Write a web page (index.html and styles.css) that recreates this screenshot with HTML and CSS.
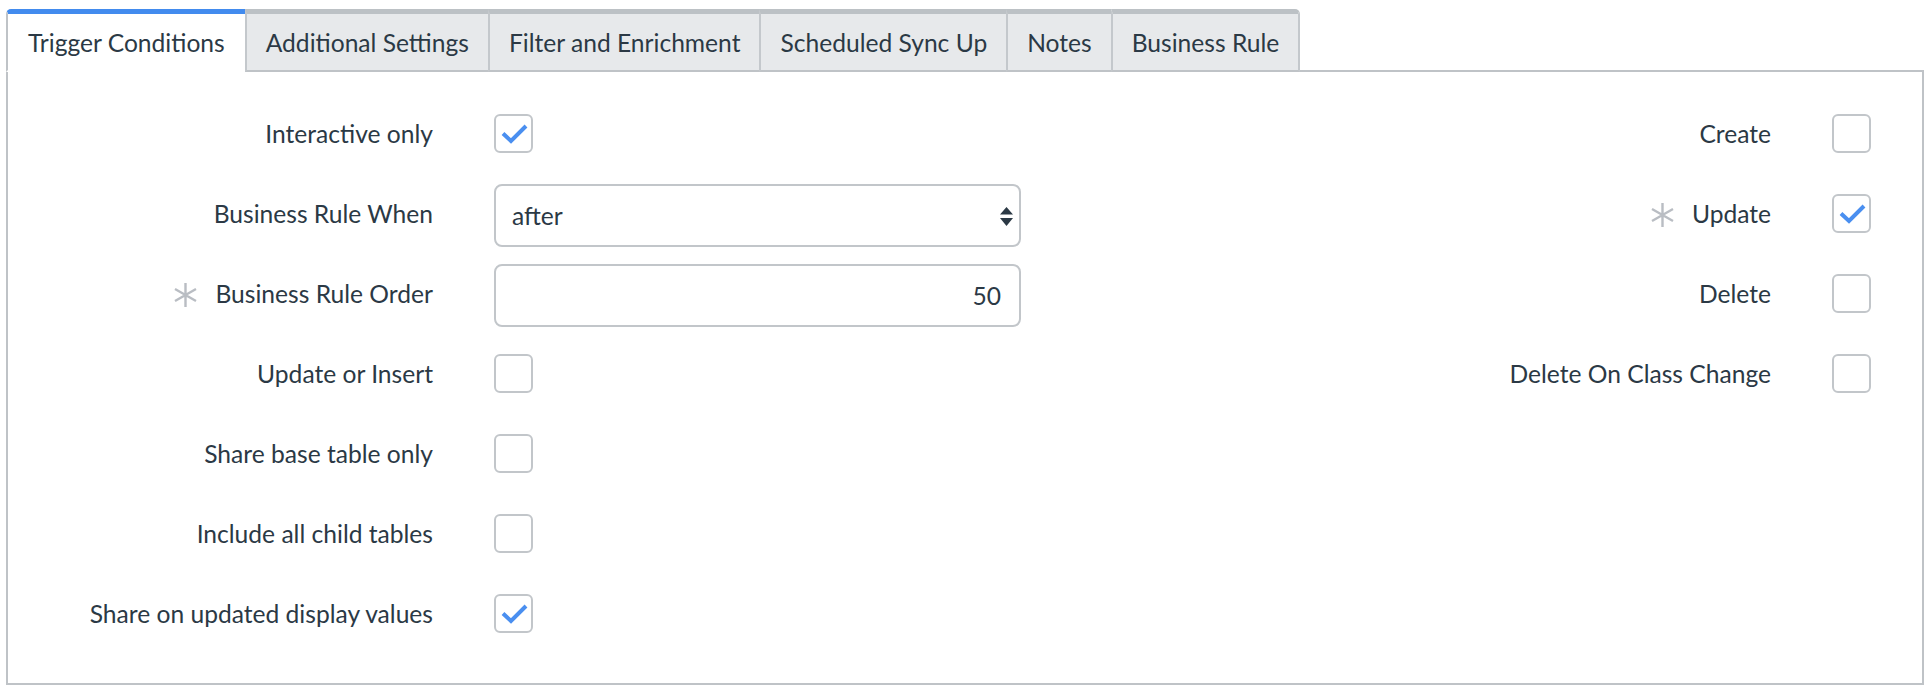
FILE: index.html
```html
<!DOCTYPE html>
<html lang="en">
<head>
<meta charset="utf-8">
<title>Trigger Conditions</title>
<link rel="stylesheet" href="styles.css">
</head>
<body>
<div class="panel">
  <div class="tabs">
    <div class="tab active">Trigger Conditions</div>
    <div class="tab">Additional Settings</div>
    <div class="tab">Filter and Enrichment</div>
    <div class="tab">Scheduled Sync Up</div>
    <div class="tab">Notes</div>
    <div class="tab last">Business Rule</div>
    <div class="tab-fill"></div>
  </div>
  <div class="body">
    <div class="col col-left">
      <div class="label">Interactive only</div>
      <div class="checkbox checked"><svg viewBox="0 0 39 39"><path d="M9 19.5 L17 27 L32 12" /></svg></div>

      <div class="label">Business Rule When</div>
      <div class="select">
        <span>after</span>
        <svg class="arrows" viewBox="0 0 13 19"><path d="M6.5 0 L13 7.5 L0 7.5 Z M0 11 L13 11 L6.5 19 Z"/></svg>
      </div>

      <div class="label"><svg class="req" viewBox="0 0 25 24"><path d="M12.5 0 V24 M2 6 L23 18 M2 18 L23 6"/></svg>Business Rule Order</div>
      <div class="input">50</div>

      <div class="label">Update or Insert</div>
      <div class="checkbox"></div>

      <div class="label">Share base table only</div>
      <div class="checkbox"></div>

      <div class="label">Include all child tables</div>
      <div class="checkbox"></div>

      <div class="label">Share on updated display values</div>
      <div class="checkbox checked"><svg viewBox="0 0 39 39"><path d="M9 19.5 L17 27 L32 12" /></svg></div>
    </div>

    <div class="col col-right">
      <div class="label">Create</div>
      <div class="checkbox"></div>

      <div class="label"><svg class="req" viewBox="0 0 25 24"><path d="M12.5 0 V24 M2 6 L23 18 M2 18 L23 6"/></svg>Update</div>
      <div class="checkbox checked"><svg viewBox="0 0 39 39"><path d="M9 19.5 L17 27 L32 12" /></svg></div>

      <div class="label">Delete</div>
      <div class="checkbox"></div>

      <div class="label">Delete On Class Change</div>
      <div class="checkbox"></div>
    </div>
  </div>
</div>
</body>
</html>
```
FILE: styles.css
```css
html, body {
  margin: 0;
  padding: 0;
  background: #ffffff;
}

body {
  font-family: "Lato", "Noto Sans", sans-serif;
  color: #2b3945;
  font-size: 24.6px;
}

.panel {
  margin: 9px 2px 0 6px;
}

/* ---------- tabs ---------- */
.tabs {
  display: flex;
  height: 63px;
}

.tab {
  display: flex;
  align-items: center;
  padding: 0 19px;
  background: #e7e9eb;
  border-top: 5px solid #bcc1c5;
  border-left: 2px solid #c4c8cc;
  border-bottom: 2px solid #bfc3c7;
  white-space: nowrap;
}

.tab.active {
  background: #ffffff;
  border-top-color: #428bee;
  border-left-color: #bfc3c7;
  border-bottom-color: #ffffff;
  border-top-left-radius: 5px;
  padding: 0 20px;
}

.tab.last {
  border-right: 2px solid #c4c8cc;
  border-top-right-radius: 5px;
}

.tab-fill {
  flex: 1;
  border-bottom: 2px solid #bfc3c7;
}

/* ---------- body ---------- */
.body {
  display: flex;
  justify-content: space-between;
  border: 2px solid #bfc3c7;
  border-top: none;
  padding: 21px 51px 30px 0;
}

.col {
  display: grid;
  grid-auto-rows: 80px;
  align-items: center;
  column-gap: 61px;
}

.col-left {
  grid-template-columns: 425px 527px;
}

.col-right {
  grid-template-columns: auto 39px;
  align-content: start;
}

.label {
  display: flex;
  align-items: center;
  justify-content: flex-end;
  white-space: nowrap;
}

.req {
  width: 25px;
  height: 24px;
  margin-right: 17px;
  margin-top: 4px;
}

.req path {
  fill: none;
  stroke: #b9bdc3;
  stroke-width: 2.4;
}

.checkbox {
  box-sizing: border-box;
  width: 39px;
  height: 39px;
  border: 2px solid #c2c6ca;
  border-radius: 6px;
  background: #fff;
  justify-self: start;
  position: relative;
}

.checkbox svg {
  position: absolute;
  left: -2px;
  top: -2px;
  width: 39px;
  height: 39px;
}

.checkbox svg path {
  fill: none;
  stroke: #4a8ff0;
  stroke-width: 4;
  stroke-linecap: butt;
  stroke-linejoin: miter;
}

.select,
.input {
  box-sizing: border-box;
  width: 527px;
  height: 63px;
  border: 2px solid #c2c6ca;
  border-radius: 8px;
  background: #fff;
  display: flex;
  align-items: center;
  margin-top: 4px;
}

.select {
  justify-content: space-between;
  padding: 0 6px 0 16px;
}

.select .arrows {
  width: 13px;
  height: 19px;
  margin-top: 2px;
}

.select .arrows path {
  fill: #2b3945;
}

.input {
  justify-content: flex-end;
  padding-right: 18px;
}
```
